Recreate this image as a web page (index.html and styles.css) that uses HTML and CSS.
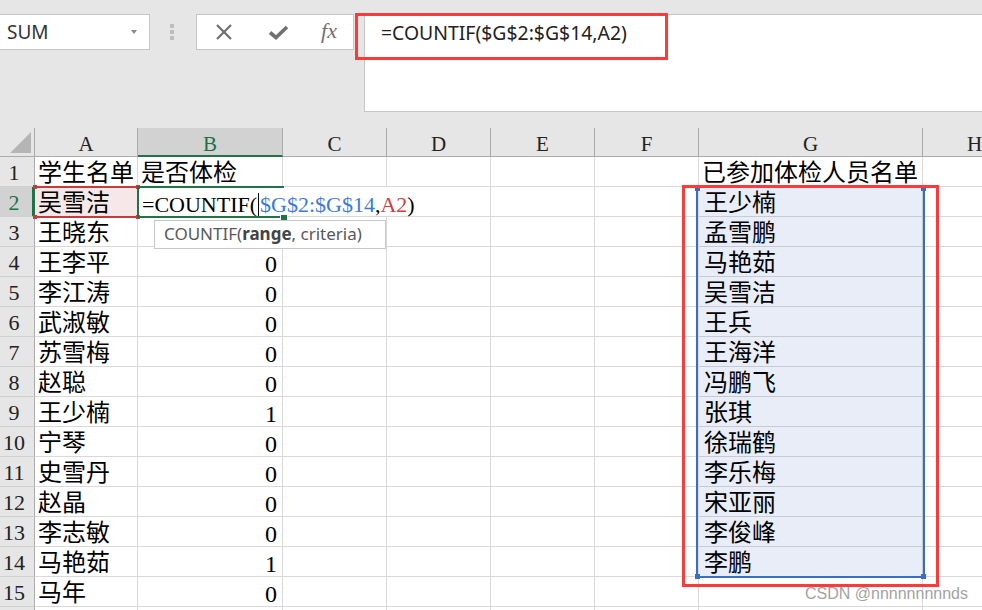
FILE: index.html
```html
<!DOCTYPE html>
<html lang="zh-CN">
<head>
<meta charset="utf-8">
<title>COUNTIF</title>
<link rel="stylesheet" href="styles.css">
</head>
<body>
<div class="app">
  <div class="toolbar">
    <div class="namebox"><span>SUM</span><span class="caret"></span></div>
    <div class="grip"><i></i><i></i><i></i></div>
    <div class="fxbox">
      <span class="fxslot"><svg width="18" height="16" viewBox="0 0 18 16"><path d="M2 1L16 15M16 1L2 15" stroke="#707070" stroke-width="2.2" fill="none"/></svg></span>
      <span class="fxslot"><svg width="21" height="15" viewBox="0 0 21 15"><path d="M2 7.5L8 12.5L19 2" stroke="#707070" stroke-width="3.6" fill="none" stroke-linejoin="miter"/></svg></span>
      <span class="fxslot fx">fx</span>
    </div>
    <div class="formula"><span class="ftext">=COUNTIF($G$2:$G$14,A2)</span></div>
  </div>

  <div class="sheet">
    <div class="h corner"><i></i></div><div class="h">A</div><div class="h hsel">B</div><div class="h">C</div><div class="h">D</div><div class="h">E</div><div class="h">F</div><div class="h">G</div><div class="h">H</div>

    <div class="r">1</div><div class="c">学生名单</div><div class="c">是否体检</div><div class="c"></div><div class="c"></div><div class="c"></div><div class="c"></div><div class="c">已参加体检人员名单</div><div class="c"></div>

    <div class="r sel">2</div><div class="c ref">吴雪洁</div><div class="c fcell">=COUNTIF(<span class="caretline"></span><span class="blue">$G$2:$G$14</span>,<span class="red">A2</span>)</div><div class="c"></div><div class="c"></div><div class="c rng">王少楠</div><div class="c"></div>

    <div class="r">3</div><div class="c">王晓东</div><div class="c n"></div><div class="c"></div><div class="c"></div><div class="c"></div><div class="c"></div><div class="c rng">孟雪鹏</div><div class="c"></div>

    <div class="r">4</div><div class="c">王李平</div><div class="c n">0</div><div class="c"></div><div class="c"></div><div class="c"></div><div class="c"></div><div class="c rng">马艳茹</div><div class="c"></div>

    <div class="r">5</div><div class="c">李江涛</div><div class="c n">0</div><div class="c"></div><div class="c"></div><div class="c"></div><div class="c"></div><div class="c rng">吴雪洁</div><div class="c"></div>

    <div class="r">6</div><div class="c">武淑敏</div><div class="c n">0</div><div class="c"></div><div class="c"></div><div class="c"></div><div class="c"></div><div class="c rng">王兵</div><div class="c"></div>

    <div class="r">7</div><div class="c">苏雪梅</div><div class="c n">0</div><div class="c"></div><div class="c"></div><div class="c"></div><div class="c"></div><div class="c rng">王海洋</div><div class="c"></div>

    <div class="r">8</div><div class="c">赵聪</div><div class="c n">0</div><div class="c"></div><div class="c"></div><div class="c"></div><div class="c"></div><div class="c rng">冯鹏飞</div><div class="c"></div>

    <div class="r">9</div><div class="c">王少楠</div><div class="c n">1</div><div class="c"></div><div class="c"></div><div class="c"></div><div class="c"></div><div class="c rng">张琪</div><div class="c"></div>

    <div class="r">10</div><div class="c">宁琴</div><div class="c n">0</div><div class="c"></div><div class="c"></div><div class="c"></div><div class="c"></div><div class="c rng">徐瑞鹤</div><div class="c"></div>

    <div class="r">11</div><div class="c">史雪丹</div><div class="c n">0</div><div class="c"></div><div class="c"></div><div class="c"></div><div class="c"></div><div class="c rng">李乐梅</div><div class="c"></div>

    <div class="r">12</div><div class="c">赵晶</div><div class="c n">0</div><div class="c"></div><div class="c"></div><div class="c"></div><div class="c"></div><div class="c rng">宋亚丽</div><div class="c"></div>

    <div class="r">13</div><div class="c">李志敏</div><div class="c n">0</div><div class="c"></div><div class="c"></div><div class="c"></div><div class="c"></div><div class="c rng">李俊峰</div><div class="c"></div>

    <div class="r">14</div><div class="c">马艳茹</div><div class="c n">1</div><div class="c"></div><div class="c"></div><div class="c"></div><div class="c"></div><div class="c rng">李鹏</div><div class="c"></div>

    <div class="r">15</div><div class="c">马年</div><div class="c n">0</div><div class="c"></div><div class="c"></div><div class="c"></div><div class="c"></div><div class="c"></div><div class="c"></div>

    <div class="r"></div><div class="c"></div><div class="c"></div><div class="c"></div><div class="c"></div><div class="c"></div><div class="c"></div><div class="c"></div><div class="c"></div>

    <div class="refbox"><i class="tl"></i><i class="tr"></i><i class="bl"></i><i class="br"></i></div>
    <div class="activebox"><i class="handle"></i></div>
    <div class="rangebox"><i class="tl"></i><i class="tr"></i><i class="bl"></i><i class="br"></i></div>
    <div class="tip">COUNTIF(<b>range</b>, criteria)</div>
  </div>

  <div class="mark mark-formula"></div>
  <div class="mark mark-range"></div>
  <div class="watermark">CSDN @nnnnnnnnnds</div>
</div>
</body>
</html>
```

FILE: styles.css
```css
html, body {
  margin: 0;
  padding: 0;
  background: #ffffff;
}
body {
  width: 982px;
  height: 610px;
  overflow: hidden;
}
.app {
  position: relative;
  width: 982px;
  height: 610px;
  overflow: hidden;
}

/* ---------- toolbar / formula bar ---------- */
.toolbar {
  height: 128px;
  box-sizing: border-box;
  background: #e6e6e6;
  display: flex;
  align-items: flex-start;
  padding-top: 14px;
}
.namebox {
  width: 151px;
  height: 36px;
  margin-left: -1px;
  box-sizing: border-box;
  background: #fff;
  border: 1px solid #c6c6c6;
  display: flex;
  align-items: center;
  justify-content: space-between;
  padding: 0 12px 0 7px;
  font-family: "Noto Sans", "Liberation Sans", sans-serif;
  font-size: 19px;
  color: #333;
}
.caret {
  width: 0;
  height: 0;
  border-left: 3.5px solid transparent;
  border-right: 3.5px solid transparent;
  border-top: 4px solid #8a8a8a;
}
.grip {
  margin-left: 20px;
  width: 4px;
  height: 36px;
  display: flex;
  flex-direction: column;
  justify-content: center;
  gap: 2px;
}
.grip i {
  display: block;
  width: 4px;
  height: 4px;
  background: #bdbdbd;
}
.fxbox {
  margin-left: 22px;
  width: 158px;
  height: 36px;
  box-sizing: border-box;
  background: #fff;
  border: 1px solid #c6c6c6;
  display: grid;
  grid-template-columns: 54px 54px 48px;
  align-items: center;
}
.fxslot {
  display: flex;
  justify-content: center;
  align-items: center;
}
.fx {
  font-family: "Liberation Serif", serif;
  font-style: italic;
  font-size: 22px;
  color: #707070;
  padding-bottom: 2px;
}
.formula {
  flex: 1;
  margin-left: 10px;
  height: 98px;
  box-sizing: border-box;
  background: #fff;
  border: 1px solid #c6c6c6;
  border-right: none;
  padding: 5px 0 0 16px;
  font-family: "Noto Sans", "Liberation Sans", sans-serif;
  font-size: 19.4px;
  line-height: 26px;
  color: #222;
}

/* ---------- sheet grid ---------- */
.sheet {
  position: relative;
  display: grid;
  grid-template-columns: 35px 103px 145px 104px 104px 104px 104px 224px 104px;
  grid-template-rows: 29px;
  grid-auto-rows: 30px;
}
.h {
  box-sizing: border-box;
  background: #e6e6e6;
  border-right: 1px solid #ababab;
  border-bottom: 1px solid #ababab;
  font-family: "Liberation Serif", serif;
  font-size: 21px;
  line-height: 24px;
  padding-top: 4px;
  text-align: center;
  color: #222;
}
.h.hsel {
  background: #d2d2d2;
  color: #1f6e4a;
  border-bottom: 2px solid #217346;
}
.corner {
  display: flex;
  justify-content: flex-end;
  align-items: flex-end;
  padding: 0 3px 3px 0;
}
.corner i {
  display: block;
  width: 21px;
  height: 21px;
  background: #b5b5b5;
  clip-path: polygon(100% 0, 100% 100%, 0 100%);
}
.r {
  box-sizing: border-box;
  background: #e6e6e6;
  border-right: 1px solid #ababab;
  border-bottom: 1px solid #cfcfcf;
  font-family: "Liberation Serif", serif;
  font-size: 22px;
  line-height: 24px;
  padding: 4px 6px 0 0;
  text-align: center;
  color: #222;
}
.r.sel {
  background: #d2d2d2;
  color: #217346;
  border-right: 3px solid #217346;
  padding-right: 4px;
}
.c {
  box-sizing: border-box;
  border-right: 1px solid #d9d9d9;
  border-bottom: 1px solid #d9d9d9;
  font-family: "Liberation Serif", "Noto Sans CJK SC", serif;
  font-size: 24px;
  line-height: 26px;
  padding: 3px 0 0 3px;
  white-space: nowrap;
  color: #000;
}
.c.n {
  text-align: right;
  padding: 4px 5px 0 0;
}
.c.ref {
  background: #f6e8e8;
}
.c.rng {
  background: #e8edf7;
  border-bottom-color: #c5cad3;
  border-right-color: #c5cad3;
  padding-left: 5px;
}
.c.fcell {
  grid-column: span 3;
  font-size: 22px;
  padding: 5px 0 0 4px;
}
.blue { color: #3b7bd6; }
.red { color: #cc3f3f; }
.caretline {
  display: inline-block;
  width: 0;
  height: 23px;
  border-left: 1px solid #000;
  vertical-align: -4px;
  margin: 0 1px 0 1px;
}

/* ---------- overlays ---------- */
.refbox {
  position: absolute;
  left: 35px;
  top: 58px;
  width: 103px;
  height: 32px;
  box-sizing: border-box;
  border-top: 2px solid #c53c3c;
  border-bottom: 2px solid #c53c3c;
}
.refbox i, .rangebox i {
  position: absolute;
  display: block;
  width: 4px;
  height: 4px;
  background: #c53c3c;
}
.refbox .tl { left: -2px; top: -3px; }
.refbox .tr { right: -2px; top: -3px; }
.refbox .bl { left: -2px; bottom: -3px; }
.refbox .br { right: -2px; bottom: -3px; }

.activebox {
  position: absolute;
  left: 137px;
  top: 58px;
  width: 147px;
  height: 32px;
  box-sizing: border-box;
  border-top: 2px solid #217346;
  border-bottom: 2px solid #217346;
  border-left: 2px solid #217346;
}
.activebox .handle {
  position: absolute;
  display: block;
  right: -3px;
  bottom: -5px;
  width: 6px;
  height: 6px;
  background: #217346;
  box-shadow: 0 0 0 1px #fff;
}

.rangebox {
  position: absolute;
  left: 696px;
  top: 58px;
  width: 229px;
  height: 392px;
  box-sizing: border-box;
  border-left: 2px solid #3a6dc6;
  border-right: 2px solid #3a6dc6;
  border-bottom: 2px solid #3a6dc6;
}
.rangebox i {
  width: 5px;
  height: 5px;
  background: #3a6dc6;
}
.rangebox .tl { left: -3px; top: 0; }
.rangebox .tr { right: -3px; top: 0; }
.rangebox .bl { left: -3px; bottom: -3px; }
.rangebox .br { right: -3px; bottom: -3px; }

.tip {
  position: absolute;
  left: 154px;
  top: 92px;
  width: 232px;
  height: 29px;
  box-sizing: border-box;
  background: #fff;
  border: 1px solid #c8c8c8;
  padding-left: 9px;
  font-family: "Noto Sans", "Liberation Sans", sans-serif;
  font-size: 17px;
  line-height: 26px;
  color: #595959;
  white-space: nowrap;
}
.tip b {
  color: #444;
  font-weight: 700;
}

.mark {
  position: absolute;
  box-sizing: border-box;
  border: 3px solid #ff3a3a;
}
.mark-formula {
  left: 355px;
  top: 13px;
  width: 313px;
  height: 47px;
}
.mark-range {
  left: 682px;
  top: 185px;
  width: 257px;
  height: 402px;
}
.watermark {
  position: absolute;
  left: 805px;
  top: 584px;
  font-family: "Liberation Sans", "Noto Sans", sans-serif;
  font-size: 16px;
  line-height: 20px;
  color: #a3a3a3;
  white-space: nowrap;
}
```
